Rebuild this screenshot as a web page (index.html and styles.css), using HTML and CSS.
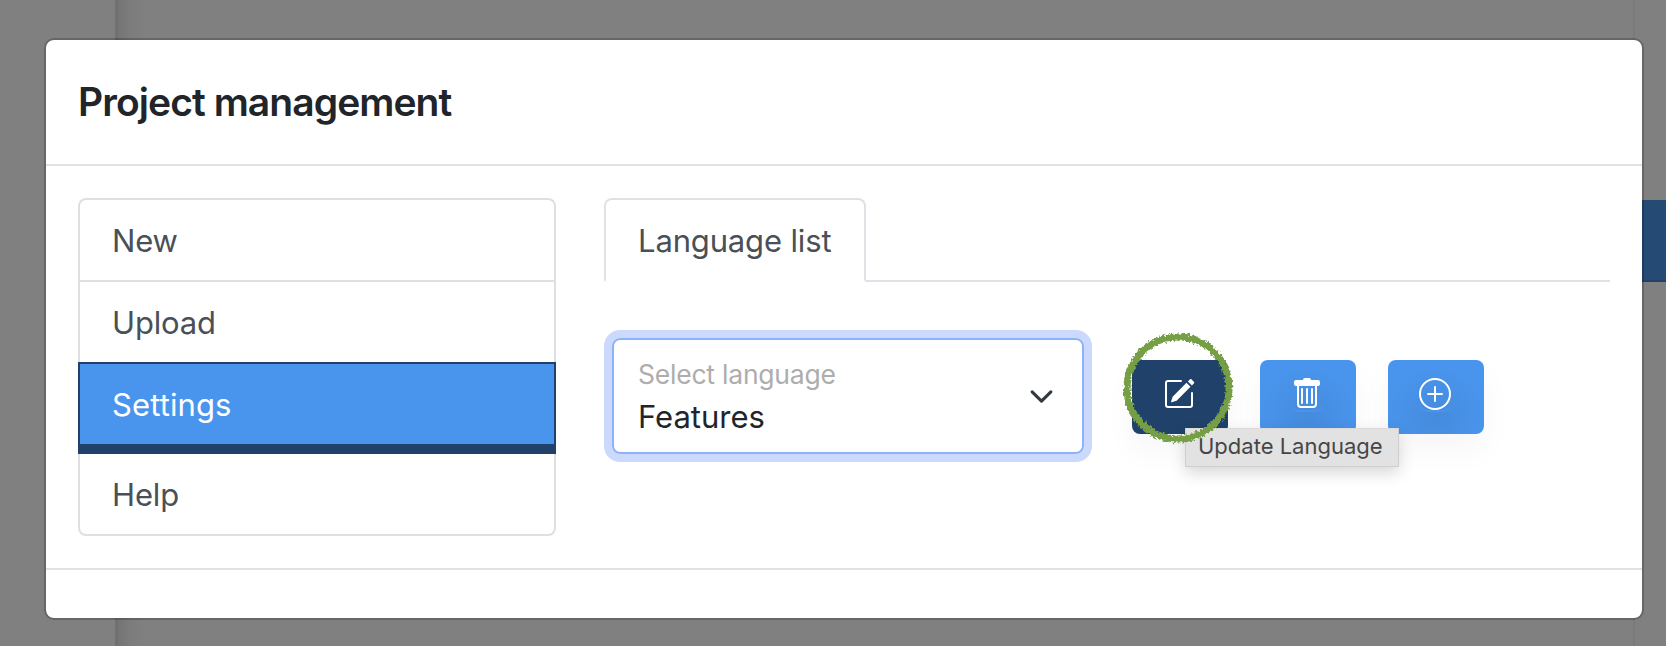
FILE: index.html
```html
<!DOCTYPE html>
<html lang="en">
<head>
<meta charset="utf-8">
<title>Project management</title>
<link rel="stylesheet" href="styles.css">
</head>
<body>
<div class="page">
  <div class="backdrop">
    <div class="backdrop-side"></div>
    <div class="backdrop-main"></div>
    <div class="backdrop-right"><div class="backdrop-bar"></div></div>
  </div>
  <section class="modal">
    <header class="modal-header"><h1 class="title">Project management</h1></header>
    <div class="modal-body">
      <nav class="menu">
        <a class="menu-item">New</a>
        <a class="menu-item">Upload</a>
        <a class="menu-item active">Settings</a>
        <a class="menu-item">Help</a>
      </nav>
      <div class="content">
        <div class="tabs">
          <div class="tab">Language list</div>
          <div class="tab-line"></div>
        </div>
        <div class="controls">
          <div class="select">
            <div class="select-text">
              <span class="select-label">Select language</span>
              <span class="select-value">Features</span>
            </div>
            <svg class="chevron" viewBox="0 0 16 16"><path d="m2 5 6 6 6-6" fill="none" stroke="#343a40" stroke-width="2" stroke-linecap="round" stroke-linejoin="round"/></svg>
          </div>
          <div class="buttons">
            <button class="btn btn-dark">
              <svg class="icon" viewBox="0 0 16 16"><path d="M15.502 1.94a.5.5 0 0 1 0 .706L14.459 3.69l-2-2L13.502.646a.5.5 0 0 1 .707 0l1.293 1.293zm-1.750 2.456-2-2L4.939 9.210a.5.5 0 0 0-.121.196l-.805 2.414a.25.25 0 0 0 .316.316l2.414-.805a.5.5 0 0 0 .196-.12l6.813-6.814z"/><path fill-rule="evenodd" d="M1 13.5A1.5 1.5 0 0 0 2.5 15h11a1.5 1.5 0 0 0 1.5-1.5v-6a.5.5 0 0 0-1 0v6a.5.5 0 0 1-.5.5h-11a.5.5 0 0 1-.5-.5v-11a.5.5 0 0 1 .5-.5H9a.5.5 0 0 0 0-1H2.5A1.5 1.5 0 0 0 1 2.5v11z"/></svg>
              <span class="tooltip">Update Language</span>
              <svg class="ring" viewBox="0 0 120 120">
                <filter id="chalk" x="-10%" y="-10%" width="120%" height="120%"><feTurbulence type="fractalNoise" baseFrequency="0.4" numOctaves="2" seed="4"/><feDisplacementMap in="SourceGraphic" scale="6" xChannelSelector="R" yChannelSelector="G"/></filter>
                <circle cx="60" cy="60" r="51" fill="none" stroke="#749e45" stroke-width="7" filter="url(#chalk)"/>
              </svg>
            </button>
            <button class="btn">
              <svg class="icon tile" viewBox="0 0 16 16"><path d="M2.5 1a1 1 0 0 0-1 1v1a1 1 0 0 0 1 1H3v9a2 2 0 0 0 2 2h6a2 2 0 0 0 2-2V4h.5a1 1 0 0 0 1-1V2a1 1 0 0 0-1-1H10a1 1 0 0 0-1-1H7a1 1 0 0 0-1 1H2.5zM4 4h8v9a1 1 0 0 1-1 1H5a1 1 0 0 1-1-1V4zm1.500 1a.5.5 0 0 1 .5.5v7a.5.5 0 0 1-1 0v-7a.5.5 0 0 1 .5-.5zM8 5a.5.5 0 0 1 .5.5v7a.5.5 0 0 1-1 0v-7A.5.5 0 0 1 8 5zm3 .5v7a.5.5 0 0 1-1 0v-7a.5.5 0 0 1 1 0z" fill-rule="evenodd"/></svg>
            </button>
            <button class="btn">
              <svg class="icon tile" viewBox="0 0 16 16"><path d="M8 15A7 7 0 1 1 8 1a7 7 0 0 1 0 14zm0 1A8 8 0 1 0 8 0a8 8 0 0 0 0 16z"/><path d="M8 4a.5.5 0 0 1 .5.5v3h3a.5.5 0 0 1 0 1h-3v3a.5.5 0 0 1-1 0v-3h-3a.5.5 0 0 1 0-1h3v-3A.5.5 0 0 1 8 4z"/></svg>
            </button>
          </div>
        </div>
      </div>
    </div>
    <footer class="modal-footer"></footer>
  </section>
</div>
</body>
</html>
```

FILE: styles.css
```css
* { box-sizing: border-box; }
body { margin: 0; font-family: Inter, "Liberation Sans", sans-serif; background: #808080; overflow: hidden; }
.page { position: relative; width: 1666px; height: 646px; padding: 38px 0 0 44px; overflow: hidden; }

/* dimmed page behind the dialog */
.backdrop { position: absolute; inset: 0; display: flex; background: #808080; }
.backdrop-side { width: 115px; }
.backdrop-main { flex: 1; border-left: 3px solid #707070; border-right: 2px solid #7a7a7a; background: linear-gradient(90deg, #747474, #7c7c7c 12px, #808080 27px); }
.backdrop-right { width: 31px; padding-top: 200px; }
.backdrop-bar { height: 82px; background: #254a74; border-bottom: 2px solid #214369; }

.modal { position: relative; width: 1600px; height: 582px; border: 2px solid rgba(0,0,0,.2); border-radius: 10px; background: #fff; background-clip: padding-box; display: flex; flex-direction: column; }
.modal-header { height: 126px; padding: 0 32px; border-bottom: 2px solid #dee2e6; display: flex; align-items: center; }
.title { margin: 0; font-size: 39px; font-weight: 600; line-height: 60px; color: #212529; letter-spacing: -.93px; white-space: nowrap; }
.modal-body { flex: 1; padding: 32px 32px 0; display: flex; gap: 48px; }
.modal-footer { height: 50px; border-top: 2px solid #dee2e6; }

.menu { width: 478px; height: 338px; display: flex; flex-direction: column; border-radius: 8px; font-size: 31px; color: #495057; }
.menu-item { height: 82px; padding: 2px 32px 0; border: 2px solid #dfdfdf; border-bottom: 0; display: flex; align-items: center; line-height: 48px; letter-spacing: -.15px; }
.menu-item:first-child { border-radius: 8px 8px 0 0; }
.menu-item:last-child { border-top: 0; border-bottom: 2px solid #dfdfdf; border-radius: 0 0 8px 8px; }
.menu-item.active { height: 92px; color: #fff; background: #4994ec; border: 2px solid #204169; border-bottom-width: 10px; letter-spacing: .1px; }

.content { flex: 1; }
.tabs { display: flex; height: 84px; align-items: flex-end; }
.tab { width: 262px; height: 84px; padding: 0 32px; border: 2px solid #dee2e6; border-bottom-color: #fff; border-radius: 8px 8px 0 0; display: flex; align-items: center; font-size: 31px; color: #495057; letter-spacing: -.15px; white-space: nowrap; }
.tab-line { flex: 1; height: 2px; background: #dee2e6; }
.controls { display: flex; padding: 56px 0 0 8px; gap: 48px; }
.select { width: 472px; height: 116px; border: 2px solid #8cb3f9; border-radius: 8px; box-shadow: 0 0 0 8px #cbd9fd; display: flex; align-items: center; justify-content: space-between; padding: 0 28px 0 24px; }
.select-text { display: flex; flex-direction: column; padding-top: 4px; white-space: nowrap; }
.select-label { font-size: 26.500px; line-height: 36px; color: #adadad; letter-spacing: -.22px; }
.select-value { font-size: 31px; line-height: 49px; color: #212529; }
.chevron { width: 25px; height: 25px; }
.buttons { display: flex; gap: 32px; padding-top: 22px; }
.btn { position: relative; width: 96px; height: 74px; padding: 0 0 6px 31px; margin: 0; border: 0; border-radius: 8px; background: radial-gradient(circle at 50% 75%, #458bdd, #4994ec 48px); font-family: inherit; box-shadow: 0 16px 32px rgba(0,0,0,.04); }
.btn-dark { background: #204169; z-index: 2; }
.icon { display: block; width: 32px; height: 32px; fill: #fff; }
.tile { border-radius: 8px; box-shadow: 0 2px 0 #4994ec; }
.ring { position: absolute; left: -14px; top: -32px; width: 120px; height: 120px; }
.tooltip { position: absolute; left: 53px; top: 68px; width: 214px; height: 39px; padding-left: 12px; border: 1px solid #cfcfcf; border-top-color: #dadada; background: #e2e2e2; box-shadow: 0 6px 16px rgba(0,0,0,.16); font-size: 22px; line-height: 34px; text-align: left; color: #464646; white-space: nowrap; }
```
